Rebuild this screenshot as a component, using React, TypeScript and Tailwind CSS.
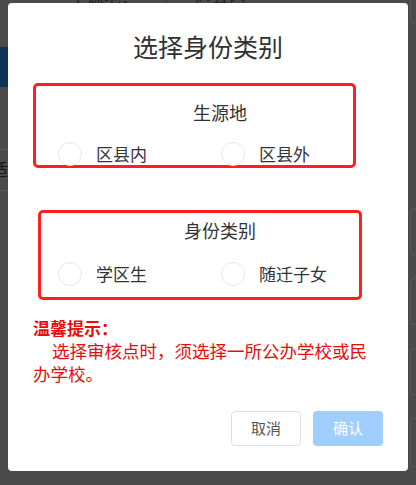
import React from "react";

const font = { fontFamily: '"Noto Sans CJK SC", "Noto Sans", sans-serif' };

function Radio({ label }: { label: string }) {
  return (
    <div className="flex items-center gap-[14px]">
      <span className="block w-[24px] h-[24px] rounded-full border border-[#e4e7ed] bg-transparent" />
      <span className="text-[17px] leading-[24px] text-[#333]">{label}</span>
    </div>
  );
}

export default function App() {
  return (
    <div className="relative w-[416px] h-[485px] overflow-hidden bg-[#4a4a4a]" style={font}>
      {/* dimmed page behind the overlay */}
      <div className="absolute left-0 top-[47px] w-[8px] h-[40px] bg-[#0e3254]" />
      <div className="absolute left-0 top-[149px] w-[8px] h-px bg-[#5c5c5c]" />
      <div className="absolute left-0 top-[190px] w-[8px] h-px bg-[#5c5c5c]" />
      <div className="absolute left-[-9px] top-[157px] text-[17px] leading-[24px] text-[#161616]">适</div>
      <div className="absolute left-[70px] top-[-14px] flex items-center gap-[28px] text-[17px] leading-[20px] text-[#222]">
        <span>下源地：</span>
        <span className="w-px h-[20px] bg-[#3a3a3a]" />
        <span>区县内</span>
      </div>
      <div className="absolute left-[410px] top-[-20px] w-[20px] h-[43px] rounded-[4px] border border-[#5a5a5a]" />
      <div className="absolute left-[410px] top-[208px] w-[20px] h-[47px] rounded-[4px] border border-[#5a5a5a]" />
      <div className="absolute left-[410px] top-[278px] w-[20px] h-[47px] rounded-[4px] border border-[#5a5a5a]" />
      <div className="absolute left-[410px] top-[348px] w-[20px] h-[47px] rounded-[4px] border border-[#5a5a5a]" />
      <div className="absolute left-[410px] top-[418px] w-[20px] h-[49px] rounded-[4px] border border-[#5a5a5a]" />

      {/* dialog */}
      <div className="absolute left-[8px] top-[3px] w-[400px] h-[468px] rounded-[4px] bg-white px-[25px] flex flex-col">
        <h1 className="mt-[27px] text-center text-[25px] leading-[32px] font-normal text-[#303133]">
          选择身份类别
        </h1>

        <div className="mt-[21px] w-[323px] h-[85px] rounded-[5px] border-[3px] border-[#ff1f1f] flex flex-col">
          <div className="mt-[15px] pl-[51px] text-center text-[18px] leading-[22px] text-[#333]">生源地</div>
          <div className="mt-[19px] pl-[22px] flex">
            <div className="w-[163px]">
              <Radio label="区县内" />
            </div>
            <Radio label="区县外" />
          </div>
        </div>

        <div className="mt-[42px] ml-[5px] w-[324px] h-[90px] rounded-[5px] border-[3px] border-[#ff1f1f] flex flex-col">
          <div className="mt-[6px] pl-[40px] text-center text-[18px] leading-[22px] text-[#333]">身份类别</div>
          <div className="mt-[21px] pl-[17px] flex">
            <div className="w-[163px]">
              <Radio label="学区生" />
            </div>
            <Radio label="随迁子女" />
          </div>
        </div>

        <div className="mt-[16px] text-[17px] leading-[23px] font-bold text-[#e80c0c]">温馨提示：</div>
        <p className="w-[345px] indent-[19px] text-[17.5px] leading-[23px] text-[#e80c0c]">
          选择审核点时，须选择一所公办学校或民办学校。
        </p>

        <div className="mt-[26px] flex justify-end gap-[12px]">
          <button className="w-[70px] h-[35px] rounded-[4px] border border-[#dcdfe6] bg-white text-[15px] text-[#555]">
            取消
          </button>
          <button className="w-[70px] h-[35px] rounded-[4px] bg-[#a0cfff] text-[15px] text-white">
            确认
          </button>
        </div>
      </div>
    </div>
  );
}
